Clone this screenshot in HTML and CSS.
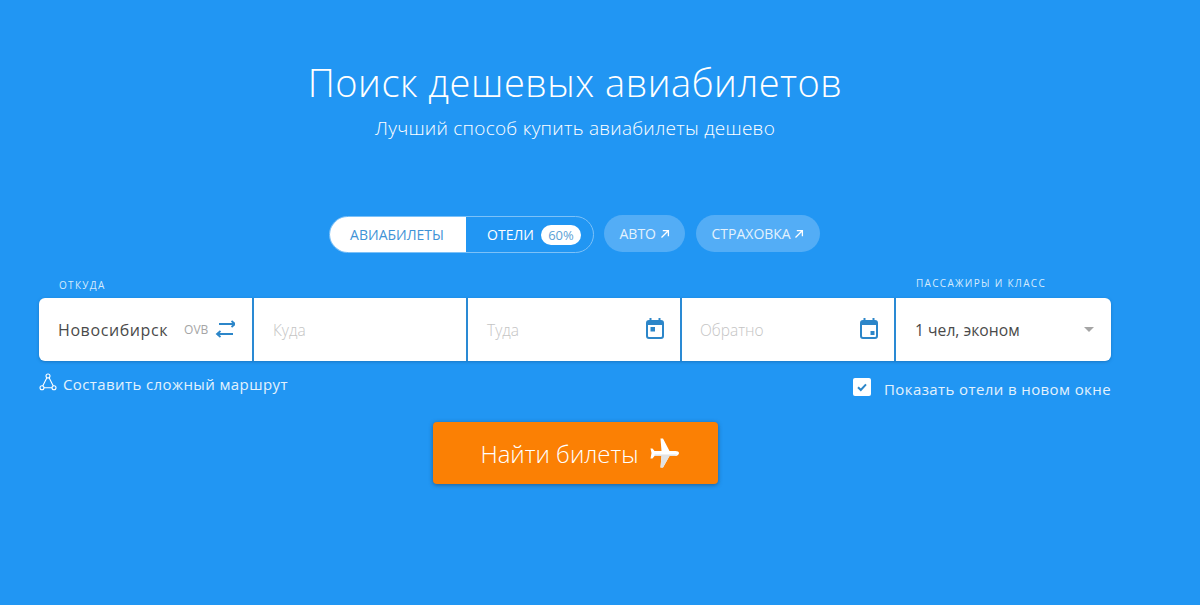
FILE: index.html
```html
<!DOCTYPE html>
<html lang="ru">
<head>
  <meta charset="UTF-8" />
  <title>Поиск дешевых авиабилетов</title>
  <link rel="stylesheet" href="styles.css">
</head>
<body>
  <div class="page">
    <h1>Поиск дешевых авиабилетов</h1>
    <p class="subtitle">Лучший способ купить авиабилеты дешево</p>

    <div class="tabs">
      <div class="tabs-main">
        <span class="tab tab-active">АВИАБИЛЕТЫ</span>
        <span class="tab tab-hotels">ОТЕЛИ <span class="badge">60%</span></span>
      </div>
      <a class="tab-link tab-auto">АВТО
        <svg class="arrow" viewBox="0 0 10 10"><path d="M1.5 8.5 8 2M2.8 1.6H8.400V7.200" /></svg>
      </a>
      <a class="tab-link tab-insurance">СТРАХОВКА
        <svg class="arrow" viewBox="0 0 10 10"><path d="M1.5 8.5 8 2M2.8 1.6H8.400V7.200" /></svg>
      </a>
    </div>

    <div class="search">
      <div class="labels">
        <span class="label">ОТКУДА</span>
        <span class="label label-pass">ПАССАЖИРЫ И КЛАСС</span>
      </div>
      <div class="fields">
        <div class="field field-from">
          <span class="value value-city">Новосибирск</span>
          <span class="iata">OVB</span>
          <svg class="swap" viewBox="0 0 20 20"><path d="M4 4h15.500M16.500 1l3.500 3-3.500 3M18 14H2.500M5.500 11 2 14l3.500 3" /></svg>
        </div>
        <div class="field"><span class="placeholder">Куда</span></div>
        <div class="field">
          <span class="placeholder">Туда</span>
          <svg class="cal" viewBox="0 0 18 21">
            <rect class="cal-line" x="1" y="3" width="16" height="17" rx="2" />
            <path class="cal-fill" d="M1 3h16v4H1zM3.500 0h2v4h-2zM12.500 0h2v4h-2zM4.500 9H9v4.500H4.500z" />
          </svg>
        </div>
        <div class="field field-back">
          <span class="placeholder">Обратно</span>
          <svg class="cal" viewBox="0 0 18 21">
            <rect class="cal-line" x="1" y="3" width="16" height="17" rx="2" />
            <path class="cal-fill" d="M1 3h16v4H1zM3.500 0h2v4h-2zM12.500 0h2v4h-2zM10.500 13h4v4h-4z" />
          </svg>
        </div>
        <div class="field field-pass">
          <span class="value">1 чел, эконом</span>
          <span class="caret"></span>
        </div>
      </div>
      <div class="options">
        <a class="route">
          <svg class="route-icon" viewBox="0 0 18 18"><path d="M8 4.500 3.600 13.200M10 4.500l4.400 8.700M4.800 14.800h8.400" /><circle cx="9" cy="3" r="2" /><circle cx="3" cy="14.800" r="2" /><circle cx="15" cy="14.800" r="2" /></svg>
          Составить сложный маршрут
        </a>
        <label class="check">
          <span class="check-box"><svg viewBox="0 0 12 12"><path d="M2 6.300 4.800 9 10 3.400" /></svg></span>
          Показать отели в новом окне
        </label>
      </div>
    </div>

    <button class="find">Найти билеты
      <svg class="plane" viewBox="0 0 30 32">
        <path class="plane-body" d="M1.500 11.500H3.500l2 2.500h7L11.500 1.500H14L20.500 14h6c2 0 3.500.9 3.500 2s-1.500 3-3.500 3h-6L14 30.500h-2.500l1-11.500h-7l-2 2.500h-2L2.500 16z" />
        <path class="plane-shade" d="M12.500 19h8L14 30.500h-2.500zM5.500 17.500H28c-.5.900-1.500 1.500-3 1.500H5.500z" />
      </svg>
    </button>
  </div>
</body>
</html>
```

FILE: styles.css
```css
* {
  box-sizing: border-box;
}
body {
  margin: 0;
  height: 605px;
  overflow: hidden;
  background: #2196f3;
  color: #fff;
  font-family: 'Open Sans', sans-serif;
}
.page {
  width: 1150px;
  display: flex;
  flex-direction: column;
  align-items: center;
}
h1 {
  margin: 58px 0 0;
  font-size: 38px;
  line-height: 48px;
  font-weight: 300;
  letter-spacing: 0.52px;
}
.subtitle {
  margin: 9px 0 0;
  font-size: 19px;
  line-height: 26px;
  font-weight: 300;
  letter-spacing: 0.25px;
}
.tabs {
  display: flex;
  align-items: flex-start;
  gap: 10px;
  margin-top: 74px;
  margin-right: 2px;
}
.tabs-main {
  display: flex;
  width: 265px;
  height: 37px;
  margin-top: 1px;
  border: 1px solid #7cc1f8;
  border-radius: 19px;
  overflow: hidden;
}
.tab {
  display: flex;
  align-items: center;
  justify-content: center;
  font-size: 14px;
}
.tab-active {
  width: 137px;
  margin: -1px 0 -1px -1px;
  background: #fff;
  color: #3f93d6;
}
.tab-hotels {
  flex: 1;
  gap: 7px;
  padding-left: 10px;
}
.badge {
  width: 40px;
  border-radius: 10px;
  background: #fff;
  color: #5b9fd6;
  font-size: 13px;
  line-height: 20px;
  text-align: center;
}
.tab-link {
  display: flex;
  align-items: center;
  gap: 4px;
  height: 37px;
  border-radius: 19px;
  background: #53adf6;
  font-size: 14px;
  color: #e3f2fd;
}
.tab-auto {
  width: 81px;
  padding-left: 16px;
}
.tab-insurance {
  width: 124px;
  margin-left: 1px;
  padding-left: 16px;
  gap: 3px;
}
.arrow {
  width: 10px;
  height: 10px;
  fill: none;
  stroke: #fff;
  stroke-width: 1.3;
}
.search {
  width: 1072px;
  margin-top: 22px;
}
.labels {
  display: flex;
  justify-content: space-between;
  height: 23px;
  padding: 1px 65px 0 20px;
  font-size: 10px;
  letter-spacing: 1.3px;
}
.label {
  line-height: 18px;
  color: #d5ebfd;
}
.label-pass {
  margin-top: -2px;
}
.fields {
  display: flex;
  gap: 2px;
  height: 63px;
  border-radius: 6px;
  background: #2a8ad4;
  box-shadow: 0 1px 3px rgba(20, 90, 150, 0.5);
  overflow: hidden;
}
.field {
  display: flex;
  align-items: center;
  flex: 0 0 212px;
  padding: 0 17px 0 19px;
  background: #fff;
  font-size: 15px;
}
.field-from {
  flex-basis: 213px;
}
.field-back {
  padding-left: 18px;
}
.field-pass {
  flex: 1;
}
.value {
  color: #4a4a4a;
  font-size: 15.700px;
}
.value-city {
  font-size: 16px;
  letter-spacing: 0.6px;
}
.placeholder {
  color: #c4c4c4;
  font-weight: 300;
  font-size: 15.500px;
}
.iata {
  margin-left: 16px;
  font-size: 12px;
  color: #a5a5a5;
}
.swap {
  width: 20px;
  height: 20px;
  margin-left: auto;
  fill: none;
  stroke: #2c86c9;
  stroke-width: 1.800;
}
.cal {
  width: 18px;
  height: 21px;
  margin-left: auto;
  margin-right: -1px;
  margin-bottom: 3px;
}
.cal-line {
  fill: #fff;
  stroke: #2c86c9;
  stroke-width: 2;
}
.cal-fill {
  fill: #2c86c9;
}
.caret {
  margin-left: auto;
  border-top: 5px solid #a5a5a5;
  border-left: 5.500px solid transparent;
  border-right: 5.500px solid transparent;
}
.options {
  display: flex;
  justify-content: space-between;
  font-size: 15px;
  letter-spacing: 0.4px;
  color: #e3f2fd;
}
.route {
  display: flex;
  align-items: center;
  gap: 6px;
  height: 22px;
  margin-top: 12px;
}
.route-icon {
  width: 18px;
  height: 18px;
  margin-top: -4px;
  fill: none;
  stroke: #fff;
  stroke-width: 1.100;
}
.check {
  display: flex;
  align-items: center;
  gap: 13px;
  margin-top: 16px;
  height: 24px;
}
.check-box {
  display: flex;
  width: 18px;
  height: 18px;
  margin-top: -5px;
  padding: 3px;
  border-radius: 2px;
  background: #fff;
}
.check-box path {
  fill: none;
  stroke: #2c86c9;
  stroke-width: 2;
}
.find {
  display: flex;
  align-items: center;
  justify-content: center;
  gap: 10px;
  width: 285px;
  height: 62px;
  margin-top: 21px;
  padding: 0 0 0 9px;
  border: 0;
  border-radius: 4px;
  background: #fb8004;
  box-shadow: 0 1px 4px rgba(30, 60, 90, 0.6);
  color: #fff;
  font-family: inherit;
  font-size: 24px;
  font-weight: 300;
}
.plane {
  width: 30px;
  height: 32px;
}
.plane-body {
  fill: #fff;
}
.plane-shade {
  fill: #e2e2e2;
}
```
